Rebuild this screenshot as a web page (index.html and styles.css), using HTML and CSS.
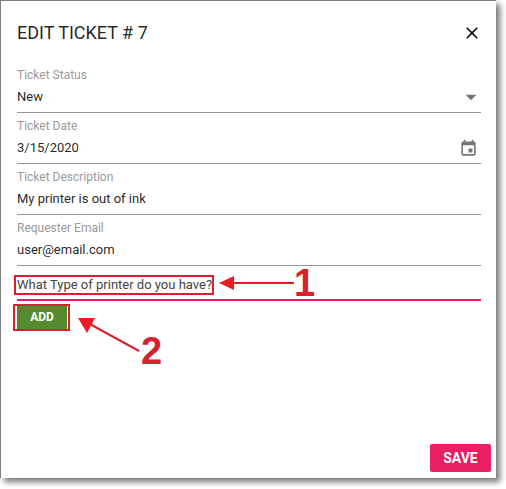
FILE: index.html
```html
<!DOCTYPE html>
<html lang="en">
  <head>
    <meta charset="UTF-8" />
    <title>Edit Ticket</title>
    <link rel="stylesheet" href="styles.css">
  </head>
  <body>
    <div class="dialog">
      <div class="header">
        <h2 class="title">EDIT TICKET # 7</h2>
        <svg class="close" width="20" height="20" viewBox="0 0 24 24"><path d="M19 6.41 17.59 5 12 10.59 6.41 5 5 6.41 10.59 12 5 17.59 6.41 19 12 13.41 17.59 19 19 17.59 13.41 12z"/></svg>
      </div>
      <div class="form">
        <div class="field">
          <label class="label">Ticket Status</label>
          <div class="value">
            <span>New</span>
            <svg class="field-icon arrow-icon" width="26" height="26" viewBox="0 0 24 24"><path d="M7 10l5 5 5-5z"/></svg>
          </div>
        </div>
        <div class="field">
          <label class="label">Ticket Date</label>
          <div class="value">
            <span>3/15/2020</span>
            <svg class="field-icon date-icon" width="19" height="19" viewBox="0 0 24 24"><path d="M17 12h-5v5h5v-5zM16 1v2H8V1H6v2H5c-1.11 0-1.99.9-1.99 2L3 19c0 1.1.89 2 2 2h14c1.1 0 2-.9 2-2V5c0-1.1-.9-2-2-2h-1V1h-2zm3 18H5V8h14v11z"/></svg>
          </div>
        </div>
        <div class="field">
          <label class="label">Ticket Description</label>
          <div class="value"><span>My printer is out of ink</span></div>
        </div>
        <div class="field">
          <label class="label">Requester Email</label>
          <div class="value"><span>user@email.com</span></div>
        </div>
        <div class="question">What Type of printer do you have?</div>
        <button type="button" class="button add">ADD</button>
      </div>
      <div class="footer">
        <button type="button" class="button save">SAVE</button>
      </div>
    </div>

    <!-- red callouts drawn on top of the screenshot -->
    <div class="mark mark-question"></div>
    <div class="mark mark-add"></div>
    <svg class="arrows" width="506" height="489" viewBox="0 0 506 489">
      <path class="arrow-line" d="M228 283H294"/>
      <path class="arrow-head" d="M219 283 234 276V290z"/>
      <path class="arrow-line" d="M88 323 139 351"/>
      <path class="arrow-head" d="M78 318 95 318 87 333z"/>
    </svg>
    <span class="callout callout-1">1</span>
    <span class="callout callout-2">2</span>
  </body>
</html>
```

FILE: styles.css
```css
/* Basic styling */
body {
  font-family: Roboto, sans-serif;
  background-color: #fff;
  margin: 0;
  padding: 0;
  width: 506px;
  height: 489px;
  overflow: hidden;
  position: relative;
}
.dialog {
  width: 496px;
  height: 478px;
  box-sizing: border-box;
  border-top: 1px solid #7d7d7d;
  border-left: 1px solid #7d7d7d;
  box-shadow: 4px 4px 6px #777;
  display: flex;
  flex-direction: column;
  color: rgba(0, 0, 0, 0.87);
}
.header {
  display: flex;
  justify-content: space-between;
  align-items: center;
  padding: 20px 14px 0 16px;
  height: 24px;
}
.title {
  margin: 0;
  font-size: 18px;
  font-weight: 400;
  line-height: 24px;
}
.close {
  fill: #111;
}
.form {
  flex: 1;
  padding: 23px 15px 0 16px;
}
.field {
  height: 44px;
  margin-bottom: 6px;
  border-bottom: 1px solid #949494;
}
.label {
  display: block;
  font-size: 12px;
  line-height: 14px;
  height: 14px;
  color: #9a9a9a;
}
.value {
  display: flex;
  justify-content: space-between;
  align-items: center;
  font-size: 13px;
  line-height: 24px;
  height: 24px;
  margin-top: 3px;
}
.field-icon {
  fill: #757575;
}
.arrow-icon {
  margin-right: -3px;
}
.date-icon {
  margin-right: 3px;
}
.question {
  margin-top: 9px;
  height: 24px;
  line-height: 19px;
  font-size: 13px;
  border-bottom: 2px solid #e91e63;
  color: #444;
}
.button {
  border: none;
  border-radius: 2px;
  color: #fff;
  font-family: Roboto, sans-serif;
  font-size: 12px;
  font-weight: 700;
  cursor: pointer;
}
.add {
  display: block;
  margin-top: 4px;
  width: 50px;
  height: 24px;
  background-color: #558b2f;
  border-radius: 0;
}
.footer {
  display: flex;
  justify-content: flex-end;
  padding: 0 5px 6px 0;
}
.save {
  width: 61px;
  height: 28px;
  font-size: 14px;
  background-color: #e91e63;
}
/* callouts */
.mark {
  position: absolute;
  box-sizing: border-box;
  border: 2px solid #d9202e;
}
.mark-question {
  left: 14px;
  top: 275px;
  width: 200px;
  height: 20px;
}
.mark-add {
  left: 13px;
  top: 304px;
  width: 57px;
  height: 27px;
}
.arrows {
  position: absolute;
  left: 0;
  top: 0;
}
.arrow-line {
  stroke: #d9202e;
  stroke-width: 2;
  fill: none;
}
.arrow-head {
  fill: #ed1c24;
}
.callout {
  position: absolute;
  font-family: "Liberation Sans", sans-serif;
  font-size: 38px;
  font-weight: 700;
  line-height: 38px;
  color: #d9202e;
}
.callout-1 {
  left: 294px;
  top: 264px;
}
.callout-2 {
  left: 141px;
  top: 332px;
}
```
